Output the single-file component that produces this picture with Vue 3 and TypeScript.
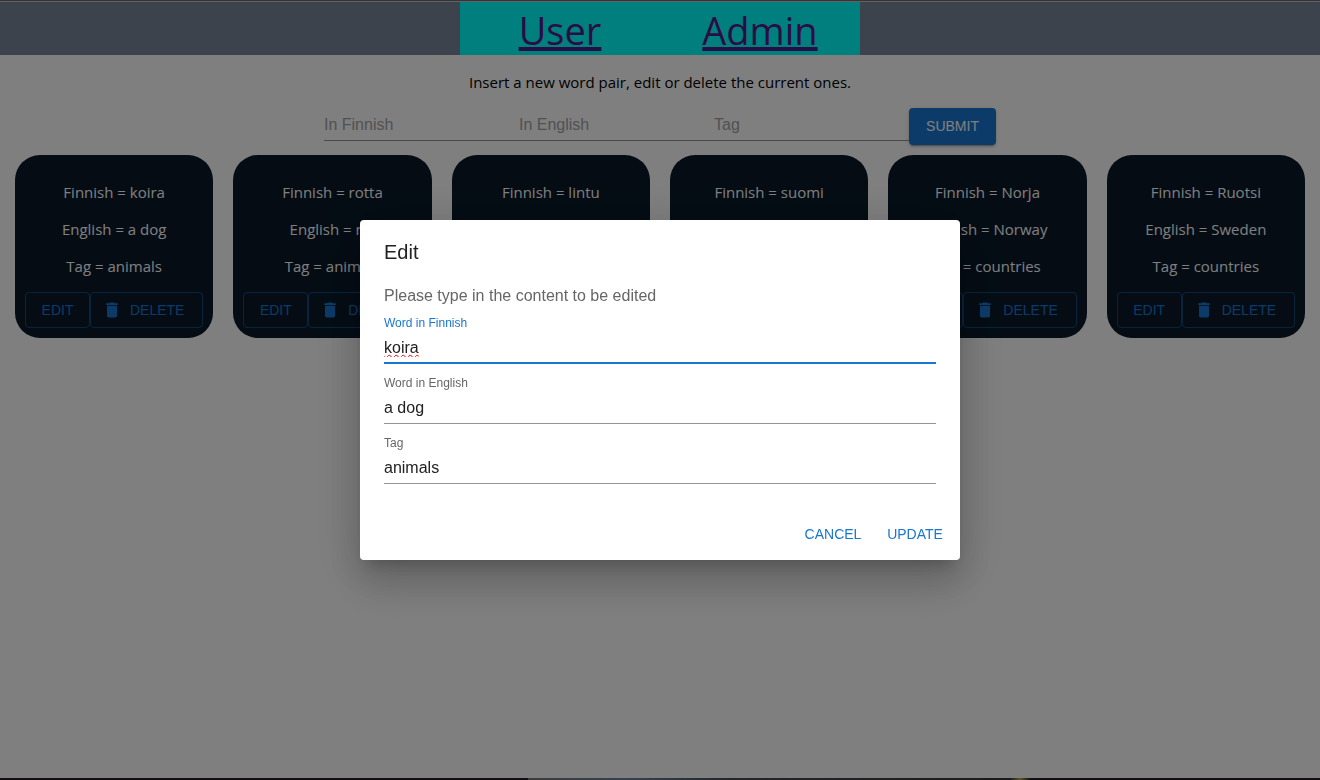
<script setup lang="ts">
import { ref } from 'vue'

interface WordPair {
  finnish: string
  english: string
  tag: string
}

const pairs = ref<WordPair[]>([
  { finnish: 'koira', english: 'a dog', tag: 'animals' },
  { finnish: 'rotta', english: 'rat', tag: 'animals' },
  { finnish: 'lintu', english: 'bird', tag: 'animals' },
  { finnish: 'suomi', english: 'Finland', tag: 'countries' },
  { finnish: 'Norja', english: 'Norway', tag: 'countries' },
  { finnish: 'Ruotsi', english: 'Sweden', tag: 'countries' },
])

const draft = ref<WordPair>({ finnish: '', english: '', tag: '' })
const edited = ref<WordPair>({ ...pairs.value[0] })
const editIndex = ref(0)
const open = ref(true)

function submit() {
  pairs.value.push({ ...draft.value })
  draft.value = { finnish: '', english: '', tag: '' }
}

function edit(index: number) {
  editIndex.value = index
  edited.value = { ...pairs.value[index] }
  open.value = true
}

function update() {
  pairs.value[editIndex.value] = { ...edited.value }
  open.value = false
}
</script>

<template>
  <div class="page">
    <header class="header">
      <nav class="nav">
        <a href="#user">User</a>
        <a href="#admin">Admin</a>
      </nav>
    </header>

    <main class="main">
      <p class="intro">Insert a new word pair, edit or delete the current ones.</p>

      <form class="form" @submit.prevent="submit">
        <input v-model="draft.finnish" class="input" aria-label="In Finnish" placeholder="In Finnish" />
        <input v-model="draft.english" class="input" aria-label="In English" placeholder="In English" />
        <input v-model="draft.tag" class="input" aria-label="Tag" placeholder="Tag" />
        <button class="button contained" type="submit">Submit</button>
      </form>

      <section class="cards">
        <article v-for="(pair, index) in pairs" :key="index" class="card">
          <p>Finnish = {{ pair.finnish }}</p>
          <p>English = {{ pair.english }}</p>
          <p>Tag = {{ pair.tag }}</p>
          <div class="card-actions">
            <button class="button outlined" type="button" @click="edit(index)">Edit</button>
            <button class="button outlined wide" type="button" @click="pairs.splice(index, 1)">
              <svg class="icon" viewBox="0 0 24 24" aria-hidden="true">
                <path d="M6 19c0 1.1.9 2 2 2h8c1.1 0 2-.9 2-2V7H6v12zM19 4h-3.5l-1-1h-5l-1 1H5v2h14V4z" />
              </svg>
              <span>Delete</span>
            </button>
          </div>
        </article>
      </section>
    </main>

    <div v-if="open" class="backdrop">
      <form class="dialog" role="dialog" aria-modal="true" aria-labelledby="dialog-title" @submit.prevent="update">
        <h2 id="dialog-title" class="dialog-title">Edit</h2>
        <div class="dialog-content">
          <p class="dialog-text">Please type in the content to be edited</p>
          <div class="field active">
            <label for="edit-finnish">Word in Finnish</label>
            <input id="edit-finnish" v-model="edited.finnish" class="input misspelled" spellcheck="false" />
          </div>
          <div class="field">
            <label for="edit-english">Word in English</label>
            <input id="edit-english" v-model="edited.english" class="input" />
          </div>
          <div class="field">
            <label for="edit-tag">Tag</label>
            <input id="edit-tag" v-model="edited.tag" class="input" />
          </div>
        </div>
        <div class="dialog-actions">
          <button class="button text" type="button" @click="open = false">Cancel</button>
          <button class="button text" type="submit">Update</button>
        </div>
      </form>
    </div>

    <div class="bottom-edge"><span></span></div>
  </div>
</template>

<style>
body {
  margin: 0;
  background: #fff;
}
</style>

<style scoped>
.page {
  display: flex;
  flex-direction: column;
  box-sizing: border-box;
  min-height: 100vh;
  border-top: 1px solid #68686e;
  font-family: 'Segoe UI', 'Open Sans', 'Noto Sans', sans-serif;
  font-size: 15px;
  line-height: 21px;
  color: #000;
}

.header {
  display: flex;
  justify-content: center;
  border-top: 1px solid #c4c4ca;
  background: #788799;
}

.nav {
  display: grid;
  grid-template-columns: 1fr 1fr;
  box-sizing: border-box;
  width: 400px;
  height: 53px;
  padding-top: 2px;
  background: #00ffff;
  font-size: 38px;
  line-height: 53px;
  text-align: center;
}

.nav a {
  color: #551a8b;
  text-decoration-thickness: 4px;
  text-underline-offset: 2px;
  text-decoration-skip-ink: none;
}

.main {
  flex: 1;
}

.intro {
  margin: 17px 0 15px;
  text-align: center;
}

.form {
  display: flex;
  justify-content: center;
  align-items: flex-start;
  margin-bottom: 10px;
}

.input {
  box-sizing: border-box;
  width: 195px;
  height: 32px;
  margin: 0;
  padding: 4px 0 3px;
  border: 0;
  border-bottom: 1px solid #949494;
  border-radius: 0;
  outline: 0;
  background: transparent;
  font-family: 'Liberation Sans', Arial, sans-serif;
  font-size: 16px;
  line-height: 24px;
  color: #212121;
}

.form .input {
  margin-top: 1px;
}

.input::placeholder {
  color: #a3a3a3;
  opacity: 1;
}

.button {
  display: inline-flex;
  align-items: center;
  justify-content: center;
  box-sizing: border-box;
  min-height: 36px;
  padding: 6px 8px;
  border: 0;
  border-radius: 4px;
  background: transparent;
  font-family: 'Liberation Sans', Arial, sans-serif;
  font-size: 14px;
  line-height: 24px;
  text-transform: uppercase;
  color: #1976d2;
  cursor: pointer;
}

.contained {
  width: 87px;
  min-height: 37px;
  padding: 5px 8px 7px;
  background: #1976d2;
  box-shadow:
    0 3px 1px -2px rgba(0, 0, 0, 0.2),
    0 2px 2px 0 rgba(0, 0, 0, 0.14),
    0 1px 5px 0 rgba(0, 0, 0, 0.12);
  color: #fff;
}

.cards {
  display: grid;
  grid-template-columns: repeat(6, 1fr);
  gap: 20px;
  padding: 0 15px;
}

.card {
  box-sizing: border-box;
  padding: 19px 10px 10px;
  border-radius: 25px;
  background: #0a1929;
  text-align: center;
  color: #fff;
}

.card p {
  margin: 0;
  line-height: 37px;
}

.card-actions {
  display: flex;
  margin-top: 7px;
}

.outlined {
  flex: 0 0 65px;
  padding: 5px;
  border: 1px solid rgba(25, 118, 210, 0.5);
}

.outlined.wide {
  flex: 1;
  gap: 8px;
  justify-content: flex-start;
  padding-left: 11px;
}

.icon {
  width: 20px;
  height: 20px;
  fill: currentColor;
}

.backdrop {
  position: fixed;
  inset: 0;
  display: flex;
  align-items: center;
  justify-content: center;
  background: rgba(0, 0, 0, 0.5);
}

.dialog {
  width: 600px;
  max-width: calc(100% - 64px);
  border-radius: 4px;
  background: #fff;
  box-shadow:
    0 11px 15px -7px rgba(0, 0, 0, 0.2),
    0 24px 38px 3px rgba(0, 0, 0, 0.14),
    0 9px 46px 8px rgba(0, 0, 0, 0.12);
  font-family: 'Liberation Sans', Arial, sans-serif;
  color: #212121;
}

.dialog-title {
  margin: 0;
  padding: 16px 24px;
  font-size: 20px;
  font-weight: 400;
  line-height: 32px;
}

.dialog-content {
  padding: 0 24px 20px;
}

.dialog-text {
  margin: 0;
  font-size: 16px;
  line-height: 24px;
  color: #666;
}

.field {
  display: flex;
  flex-direction: column;
  margin: 8px 0 4px;
}

.field + .field {
  margin-top: 12px;
}

.field label {
  height: 16px;
  font-size: 12px;
  line-height: 14px;
  color: #666;
}

.field .input {
  width: 100%;
}

.field.active label {
  color: #1976d2;
}

.field.active .input {
  padding-bottom: 2px;
  border-bottom: 2px solid #1976d2;
}

.misspelled {
  text-decoration: underline wavy #f00 1px;
}

.dialog-actions {
  display: flex;
  justify-content: flex-end;
  gap: 8px;
  padding: 8px;
}

.text {
  min-width: 74px;
}

.bottom-edge {
  position: fixed;
  inset: auto 0 0;
  height: 2px;
  background: #140f14;
}

.bottom-edge span {
  display: block;
  width: 38%;
  height: 2px;
  margin-left: 40%;
  background: linear-gradient(90deg, #3c3c3c, #35424e 20%, #24262a 40%, #1c1a1c 96%, #5c5426 98%, #140f14);
}
</style>
